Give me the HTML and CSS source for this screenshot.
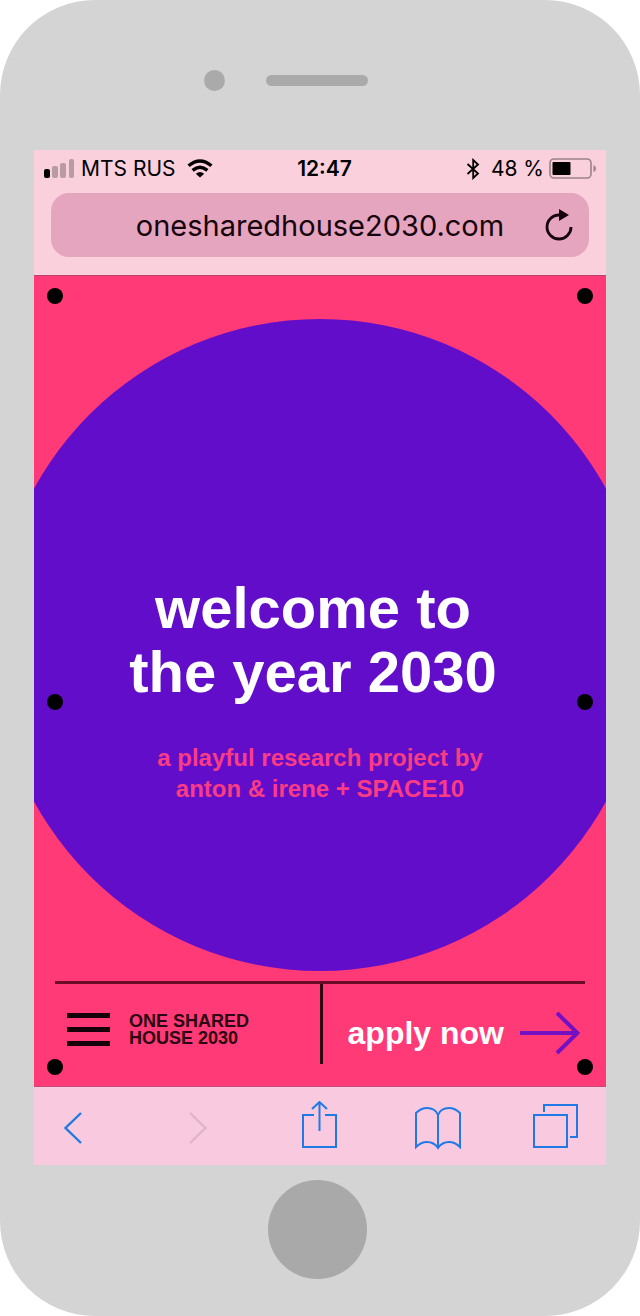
FILE: index.html
```html
<!DOCTYPE html>
<html lang="en">
<head>
<meta charset="utf-8">
<meta name="viewport" content="width=device-width, initial-scale=1">
<title>One Shared House 2030</title>
<link rel="stylesheet" href="styles.css">
</head>
<body>
<div class="phone">
  <div class="phone-top">
    <span class="camera"></span>
    <span class="speaker"></span>
  </div>

  <div class="screen">
    <header class="browser-head">
      <div class="status">
        <div class="status-left">
          <svg class="signal" width="30" height="20" viewBox="0 0 30 20" aria-hidden="true">
            <rect x="0" y="10" width="6" height="9" rx="2"/>
            <g opacity=".25"><rect x="8" y="7" width="6" height="12" rx="2"/><rect x="16" y="4" width="6" height="15" rx="2"/><rect x="25" y="0" width="5" height="19" rx="2"/></g>
          </svg>
          <span>MTS RUS</span>
          <svg class="wifi" width="26" height="20" viewBox="0 0 26 20" aria-hidden="true">
            <g fill="none" stroke="#000" stroke-width="3.4"><path d="M1.600 6.800Q13-2.800 24.400 6.800"/><path d="M5.600 11.400Q13 5 20.400 11.400"/></g>
            <path d="M8.800 14.800Q13 11.200 17.200 14.800L13 18.600Z"/>
          </svg>
        </div>
        <time class="clock">12:47</time>
        <div class="status-right">
          <svg class="bluetooth" width="14" height="22" viewBox="0 0 14 22" fill="none" stroke="#000" stroke-width="1.8" aria-hidden="true"><path d="M1.500 6L12 15.500L7.200 20V2L12 6.500L1.500 16"/></svg>
          <span>48 %</span>
          <svg class="battery" width="48" height="22" viewBox="0 0 48 22" aria-hidden="true">
            <rect x="1" y="1" width="41" height="19" rx="4" fill="none" stroke="#9c818b" stroke-width="1.600"/>
            <rect x="3.500" y="4" width="18" height="13" rx="1"/>
            <path d="M44.500 7Q47 8 47 10.500T44.500 14Z" fill="#9c818b"/>
          </svg>
        </div>
      </div>
      <form class="address">
        <input class="url" type="text" aria-label="Address" value="onesharedhouse2030.com">
        <button class="reload" type="button" aria-label="Reload">
          <svg width="30" height="34" viewBox="0 0 30 34" aria-hidden="true"><path d="M15 7A12 12 0 1 0 27 19" fill="none" stroke="#16030c" stroke-width="2.800"/><path d="M15 1L25 7L15 13Z" fill="#16030c"/></svg>
        </button>
      </form>
    </header>

    <main class="page">
      <section class="hero">
        <div class="planet">
          <h1 class="title">welcome to<br>the year 2030</h1>
          <p class="credit">a playful research project by<br>anton &amp; irene + SPACE10</p>
        </div>
      </section>
      <nav class="site-nav">
        <div class="brand">
          <button class="menu" type="button" aria-label="Menu"><span></span><span></span><span></span></button>
          <a class="brand-name" href="#">ONE SHARED<br>HOUSE 2030</a>
        </div>
        <a class="apply" href="#">
          <span>apply now</span>
          <svg width="60" height="44" viewBox="0 0 60 44" fill="none" stroke="#7410c4" stroke-width="4" aria-hidden="true"><path d="M0 22H57M37 2L57.500 22L37 42"/></svg>
        </a>
      </nav>
      <span class="dot top left"></span><span class="dot top right"></span>
      <span class="dot middle left"></span><span class="dot middle right"></span>
      <span class="dot bottom left"></span><span class="dot bottom right"></span>
    </main>

    <div class="toolbar">
      <button type="button" aria-label="Back"><svg viewBox="0 0 48 52"><path d="M25 12L9.500 27L25 42" stroke-width="2.400"/></svg></button>
      <button type="button" aria-label="Forward" disabled><svg viewBox="0 0 48 52"><path d="M15 12L30.500 27L15 42" stroke-width="2.400"/></svg></button>
      <button type="button" aria-label="Share"><svg viewBox="0 0 48 52"><path d="M20 14H9V46H42V14H31M25.500 30V1M18 8L25.500 1L33 8"/></svg></button>
      <button type="button" aria-label="Bookmarks"><svg viewBox="0 0 48 52"><path d="M25 14C23 9 19 7 14 7Q8 7 3 12V46Q8 41 14 41Q21 41 25 47Q29 41 36 41Q42 41 47 46V12Q42 7 36 7C31 7 27 9 25 14V47"/></svg></button>
      <button type="button" aria-label="Tabs"><svg viewBox="0 0 48 52"><path d="M2 14H35V46H2ZM12 11V4H45V36H38"/></svg></button>
    </div>
  </div>

  <div class="phone-bottom"><button class="home" type="button" aria-label="Home"></button></div>
</div>
</body>
</html>
```

FILE: styles.css
```css
* { box-sizing: border-box; }

body {
  margin: 0;
  background: #fff;
  font-family: "Liberation Sans", Arial, sans-serif;
  color: #000;
}

button {
  padding: 0;
  border: 0;
  background: none;
}

svg { display: block; }

a { text-decoration: none; }

/* Phone body */
.phone {
  padding: 0 34px;
  border-radius: 95px;
  background: #d4d4d4;
}

.phone-top {
  display: flex;
  align-items: center;
  justify-content: center;
  gap: 41px;
  height: 150px;
  padding: 10px 68px 0 0;
}

.camera {
  width: 21px;
  height: 21px;
  border-radius: 50%;
  background: #aaa;
}

.speaker {
  width: 102px;
  height: 11px;
  border-radius: 6px;
  background: #aaa;
}

.phone-bottom {
  display: flex;
  justify-content: center;
  padding: 15px 5px 37px 0;
}

.home {
  width: 99px;
  height: 99px;
  border-radius: 50%;
  background: #a9a9a9;
}

/* Browser header */
.browser-head {
  padding-bottom: 18px;
  border-bottom: 1px solid #b5466c;
  background: #f9d0dc;
  font-family: Inter, "Noto Sans", sans-serif;
}

.status {
  display: grid;
  grid-template-columns: 1fr auto 1fr;
  align-items: center;
  height: 43px;
  padding: 0 9px 5px 10px;
  font-size: 21px;
  line-height: 24px;
  white-space: nowrap;
}

.status-left,
.status-right {
  display: flex;
  align-items: center;
}

.status-left { gap: 7px; }

.wifi { margin-left: 4px; }

.status-right {
  justify-content: flex-end;
  gap: 5px;
}

.bluetooth { margin-right: 6px; }

.clock {
  padding-left: 8px;
  font-weight: 600;
}

.address {
  display: flex;
  height: 64px;
  margin: 0 17px;
  border-radius: 18px;
  background: #e6a5be;
}

.url {
  flex: 1;
  min-width: 0;
  padding: 0 0 0 60px;
  border: 0;
  background: none;
  color: #16030c;
  font: 29px Inter, "Noto Sans", sans-serif;
  text-align: center;
}

.reload {
  display: grid;
  place-items: center;
  width: 60px;
}

/* Web page */
.page {
  position: relative;
  overflow: hidden;
  background: #ff3a76;
  font-weight: 700;
}

.hero {
  display: flex;
  justify-content: center;
  padding: 43px 0 10px;
}

.planet {
  flex: none;
  width: 114%;
  aspect-ratio: 1;
  padding-top: 257px;
  border-radius: 50%;
  background: #610dc9;
  text-align: center;
}

.title {
  margin: 0 0 38px;
  padding-right: 14px;
  color: #fff;
  font-size: 58px;
  line-height: 64px;
}

.credit {
  margin: 0;
  color: #fa3c84;
  font-size: 24px;
  line-height: 31px;
}

.site-nav {
  display: flex;
  height: 105px;
  margin: 0 21px;
  padding-bottom: 22px;
  border-top: 3px solid #6b0b28;
}

.brand,
.apply {
  display: flex;
  flex: 1 1 50%;
  align-items: center;
}

.brand {
  gap: 19px;
  padding: 11px 0 0 12px;
}

.menu {
  display: grid;
  gap: 9px;
  width: 43px;
}

.menu span {
  height: 5px;
  background: #16000a;
}

.brand-name {
  color: #2c0612;
  font-size: 18px;
  line-height: 17px;
  white-space: nowrap;
}

.apply {
  justify-content: flex-end;
  gap: 16px;
  padding: 18px 5px 0 0;
  border-left: 3px solid #2c0612;
  color: #fff;
  font-size: 32px;
  line-height: 36px;
  white-space: nowrap;
}

.dot {
  position: absolute;
  width: 16px;
  height: 16px;
  border-radius: 50%;
  background: #000;
}

.top { top: 12px; }
.middle { top: 418px; }
.bottom { bottom: 11px; }
.left { left: 13px; }
.right { right: 13px; }

/* Browser toolbar */
.toolbar {
  display: flex;
  justify-content: space-between;
  height: 79px;
  padding: 14px 26px 0 22px;
  border-top: 1px solid #c04f7a;
  background: #f9c9df;
}

.toolbar button {
  width: 48px;
  height: 52px;
  color: #1f7ae6;
}

.toolbar button:disabled { color: #deb4ca; }

.toolbar svg {
  width: 48px;
  height: 52px;
  fill: none;
  stroke: currentColor;
  stroke-width: 2;
}
```
